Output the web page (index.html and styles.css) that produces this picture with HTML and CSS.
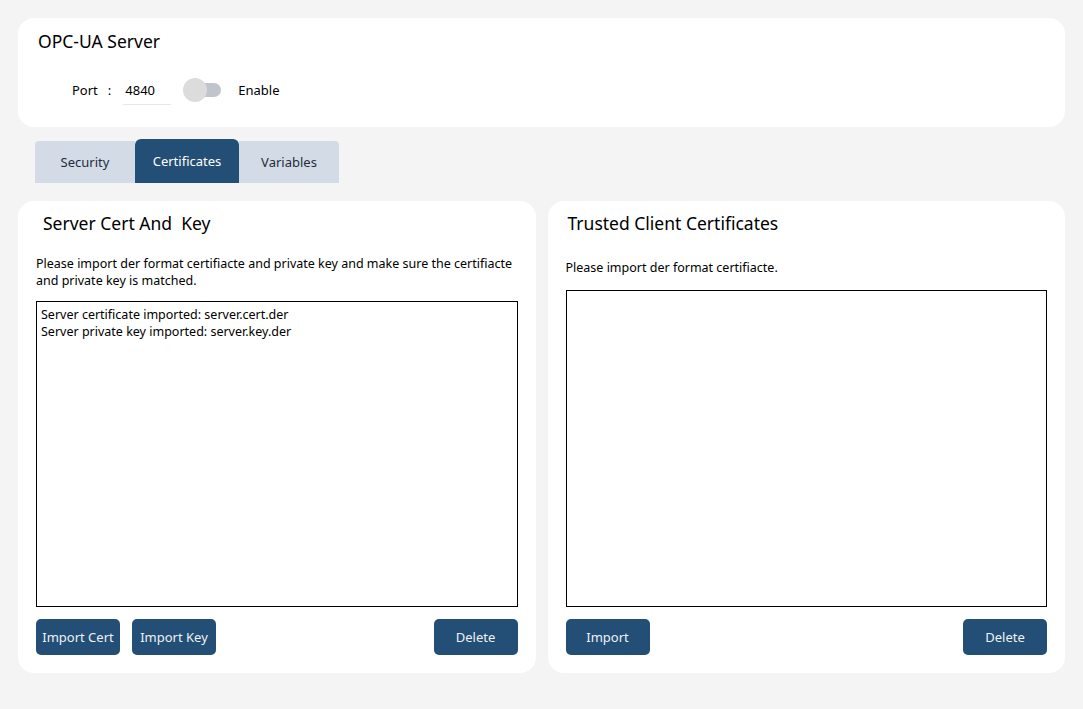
FILE: index.html
```html
<!DOCTYPE html>
<html>
<head>
    <title>OPC-UA Server</title>
    <link rel="stylesheet" href="styles.css">
</head>
<body>
    <div class="page">
        <div class="card server-card">
            <div class="card-title">OPC-UA Server</div>
            <div class="port-row">
                <span class="port-label">Port</span>
                <span class="colon">:</span>
                <input class="port-input" type="text" value="4840">
                <div class="switch"><span class="knob"></span></div>
                <span class="enable-label">Enable</span>
            </div>
        </div>

        <div class="tabs">
            <div class="tab">Security</div>
            <div class="tab active">Certificates</div>
            <div class="tab">Variables</div>
        </div>

        <div class="panels">
            <div class="card panel">
                <div class="panel-title left-title">Server Cert And&nbsp; Key</div>
                <div class="desc">Please import der format certifiacte and private key and make sure the certifiacte and private key is matched.</div>
                <div class="log-box">
                    <div>Server certificate imported: server.cert.der</div>
                    <div>Server private key imported: server.key.der</div>
                </div>
                <div class="btn-row">
                    <button class="btn">Import Cert</button>
                    <button class="btn">Import Key</button>
                    <button class="btn push-right">Delete</button>
                </div>
            </div>
            <div class="card panel">
                <div class="panel-title right-title">Trusted Client Certificates</div>
                <div class="desc right-desc">Please import der format certifiacte.</div>
                <div class="log-box right-box"></div>
                <div class="btn-row">
                    <button class="btn">Import</button>
                    <button class="btn push-right">Delete</button>
                </div>
            </div>
        </div>
    </div>
</body>
</html>
```

FILE: styles.css
```css
body {
    margin: 0;
    background: #f4f4f4;
    font-family: "Noto Sans", "Open Sans", sans-serif;
    color: #000;
}

.page {
    padding: 18px 18px 0 18px;
}

.card {
    background: #fff;
    border-radius: 16px;
}

.server-card {
    height: 109px;
    padding: 0 20px;
    box-sizing: border-box;
}

.card-title {
    font-size: 17.5px;
    padding-top: 11px;
    line-height: 24px;
}

.port-row {
    display: flex;
    align-items: center;
    margin-top: 22px;
    padding-left: 34px;
    font-size: 13px;
}

.colon {
    margin-left: 10px;
}

.port-input {
    width: 48px;
    height: 30px;
    margin-left: 12px;
    border: none;
    border-bottom: 1px solid #e4e7ed;
    outline: none;
    font: inherit;
    padding: 0 2px;
    box-sizing: border-box;
}

.switch {
    position: relative;
    width: 31px;
    height: 14px;
    margin-left: 19px;
    border-radius: 7px;
    background: #c0c4cc;
}

.knob {
    position: absolute;
    left: -7px;
    top: -5px;
    width: 24px;
    height: 24px;
    border-radius: 50%;
    background: #dcdcdc;
}

.enable-label {
    margin-left: 17px;
}

.tabs {
    display: flex;
    align-items: flex-end;
    height: 44px;
    margin: 12px 0 18px 17px;
}

.tab {
    width: 100px;
    height: 42px;
    background: #d3dbe6;
    font-size: 13px;
    color: #1f2d3d;
    display: flex;
    align-items: center;
    justify-content: center;
    border-radius: 6px 6px 0 0;
}

.tab:first-child {
    border-radius: 4px 0 0 0;
}

.tab:last-child {
    border-radius: 0 4px 0 0;
}

.tab.active {
    width: 104px;
    height: 44px;
    background: #234e75;
    color: #fff;
    border-radius: 6px 6px 0 0;
}

.panels {
    display: flex;
    gap: 12px;
}

.panel {
    flex: 1;
    height: 472px;
    padding: 0 18px 18px 18px;
    box-sizing: border-box;
    display: flex;
    flex-direction: column;
}

.panel-title {
    font-size: 17.5px;
    line-height: 24px;
    padding-top: 10px;
}

.left-title {
    padding-left: 7px;
}

.right-title {
    padding-left: 2px;
}

.desc {
    font-size: 12.5px;
    line-height: 17px;
    margin-top: 20px;
}

.right-desc {
    margin-top: 24px;
}

.log-box {
    flex: 1;
    margin-top: 12px;
    border: 1px solid #000;
    padding: 4px 4px;
    font-size: 12.5px;
    line-height: 17px;
}

.right-box {
    margin-top: 14px;
}

.btn-row {
    display: flex;
    gap: 12px;
    margin-top: 12px;
}

.btn {
    width: 84px;
    height: 36px;
    background: #234e75;
    color: #eef2f7;
    border: none;
    border-radius: 5px;
    font: inherit;
    font-size: 13px;
    cursor: pointer;
    padding: 0;
}

.push-right {
    margin-left: auto;
}
```
